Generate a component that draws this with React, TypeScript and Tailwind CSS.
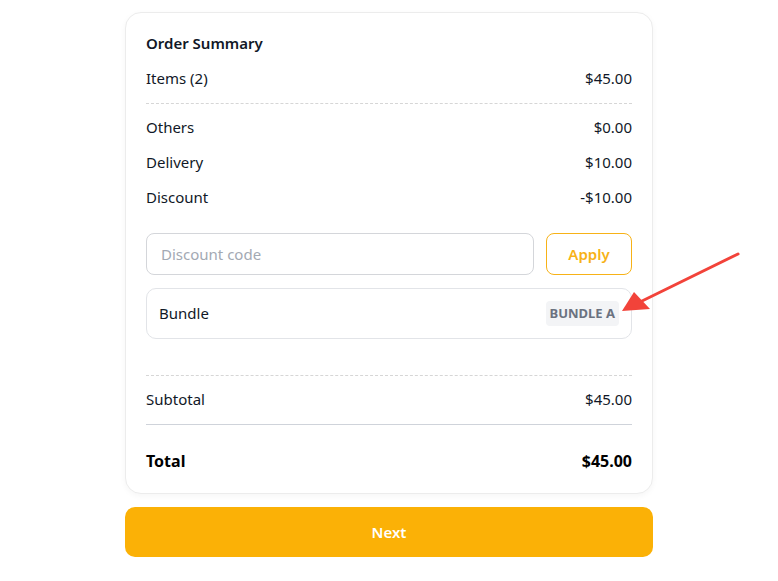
import React from "react";

function Row({ label, value, className = "" }: { label: string; value: string; className?: string }) {
  return (
    <div className={`flex h-[22px] items-center justify-between text-[15px] text-[#111827] ${className}`}>
      <span>{label}</span>
      <span>{value}</span>
    </div>
  );
}

export default function App() {
  return (
    <div
      className="relative min-h-[581px] w-full bg-white"
      style={{ fontFamily: '"Noto Sans", "Open Sans", sans-serif' }}
    >
      <div className="mx-auto w-[528px] pt-3">
        <div className="rounded-[16px] border border-[#ececec] bg-white px-5 pt-[19px] pb-[21px] shadow-[0_2px_6px_rgba(0,0,0,0.04)]">
          <div className="flex h-[22px] items-center text-[15px] font-semibold text-[#111827]">Order Summary</div>
          <Row label="Items (2)" value="$45.00" className="mt-[13px]" />
          <div className="mt-[14px] border-t border-dashed border-[#d6d6d6]" />
          <Row label="Others" value="$0.00" className="mt-[12px]" />
          <Row label="Delivery" value="$10.00" className="mt-[13px]" />
          <Row label="Discount" value="-$10.00" className="mt-[13px]" />
          <div className="mt-[25px] flex gap-3">
            <input
              placeholder="Discount code"
              className="h-[42px] flex-1 rounded-[8px] border border-[#d4d6da] px-[14px] text-[15px] text-[#111827] outline-none placeholder:text-[#a3a9b3]"
            />
            <button className="h-[42px] w-[86px] rounded-[8px] border border-[#f7b217] text-[15px] font-semibold text-[#f7b217]">
              Apply
            </button>
          </div>
          <div className="mt-[13px] flex h-[51px] items-center justify-between rounded-[10px] border border-[#e2e4e8] pl-[12px] pr-[12px]">
            <span className="text-[15px] text-[#111827]">Bundle</span>
            <span className="rounded-[4px] bg-[#f3f4f6] px-[4px] py-[3px] text-[13px] font-bold text-[#6b7280]">
              BUNDLE A
            </span>
          </div>
          <div className="mt-[36px] border-t border-dashed border-[#d6d6d6]" />
          <Row label="Subtotal" value="$45.00" className="mt-[12px]" />
          <div className="mt-[14px] border-t border-[#cfd3da]" />
          <div className="mt-[25px] flex h-[22px] items-center justify-between text-[16px] font-bold text-black">
            <span>Total</span>
            <span>$45.00</span>
          </div>
        </div>
        <button className="mt-[13px] h-[50px] w-full rounded-[10px] bg-[#fbb106] text-[15px] font-semibold text-white">
          Next
        </button>
      </div>
      <svg className="absolute left-0 top-0" width="778" height="581" viewBox="0 0 778 581">
        <line x1="738" y1="254" x2="640" y2="302" stroke="#f2433a" strokeWidth="3" strokeLinecap="round" />
        <polygon points="622,311 634,292 650,309" fill="#f2433a" />
      </svg>
    </div>
  );
}
